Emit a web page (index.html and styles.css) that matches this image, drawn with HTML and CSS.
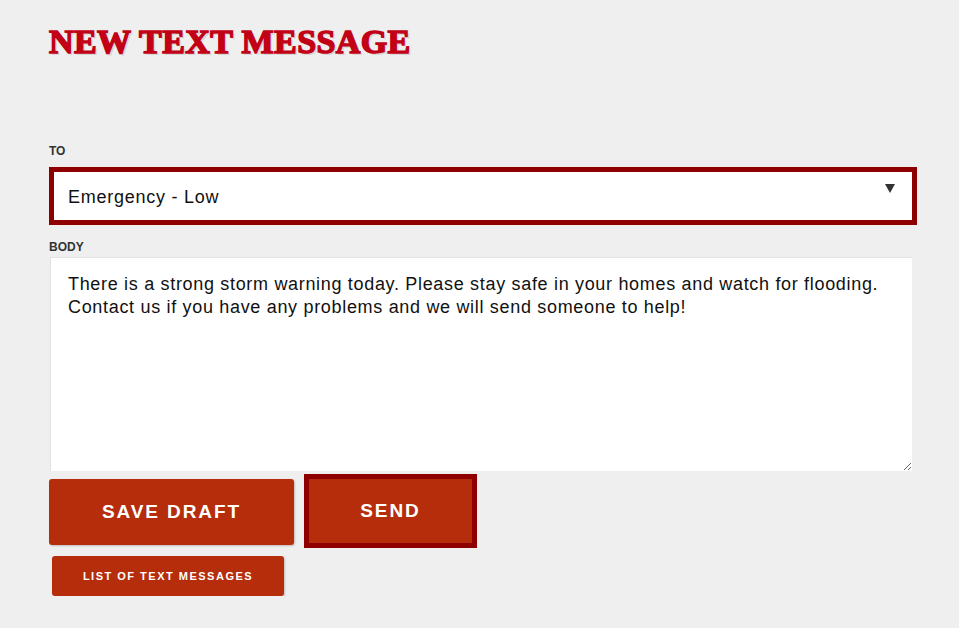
FILE: index.html
```html
<!DOCTYPE html>
<html lang="en">
<head>
<meta charset="utf-8">
<title>New Text Message</title>
<link rel="stylesheet" href="styles.css">
</head>
<body>
<main class="page">
  <h1 class="title">NEW TEXT MESSAGE</h1>
  <form class="form">
    <label class="label label-to" for="to">TO</label>
    <div class="select-wrap">
      <select id="to" class="select">
        <option>Emergency - Low</option>
      </select>
      <svg class="select-arrow" width="10" height="9" viewBox="0 0 10 9" aria-hidden="true"><polygon points="0,0 10,0 5,9" fill="#333"/></svg>
    </div>
    <label class="label label-body" for="body">BODY</label>
    <textarea id="body" class="textarea">There is a strong storm warning today. Please stay safe in your homes and watch for flooding. Contact us if you have any problems and we will send someone to help!</textarea>
    <div class="actions">
      <button type="button" class="btn btn-save">SAVE DRAFT</button>
      <button type="button" class="btn btn-send">SEND</button>
    </div>
    <button type="button" class="btn btn-list">LIST OF TEXT MESSAGES</button>
  </form>
</main>
</body>
</html>
```
FILE: styles.css
```css
html, body {
  margin: 0;
  padding: 0;
  background: #efefef;
}
body {
  font-family: "Liberation Sans", Arial, sans-serif;
  color: #111;
}
.page {
  padding: 22px 0 0 49px;
  width: 868px;
}
.title {
  margin: 0;
  font-family: "Liberation Serif", "Times New Roman", serif;
  font-weight: bold;
  font-size: 34px;
  line-height: 40px;
  letter-spacing: 0.4px;
  color: #c20016;
  -webkit-text-stroke: 1.5px #c20016;
  text-shadow: 2px 2px 0 #d6d6d6;
  white-space: nowrap;
}
.form {
  display: flex;
  flex-direction: column;
  align-items: flex-start;
}
.label {
  display: block;
  font-size: 12px;
  line-height: 14px;
  font-weight: bold;
  color: #333;
}
.label-to {
  margin-top: 82px;
  margin-bottom: 9px;
}
.label-body {
  margin-top: 15px;
  margin-bottom: 3px;
}
.select-wrap {
  position: relative;
  width: 868px;
}
.select {
  display: block;
  width: 868px;
  height: 58px;
  box-sizing: border-box;
  border: 5px solid #8e0000;
  border-radius: 0;
  background: #fff;
  appearance: none;
  -webkit-appearance: none;
  font-family: "Liberation Sans", Arial, sans-serif;
  font-size: 18px;
  letter-spacing: 0.75px;
  color: #111;
  padding: 2px 0 0 14px;
  margin: 0;
  outline: none;
}
.select-arrow {
  position: absolute;
  right: 22px;
  top: 17px;
}
.textarea {
  display: block;
  box-sizing: border-box;
  width: 862px;
  height: 214px;
  margin: 0 0 0 1px;
  border: 1px solid #e2e2e2;
  border-right: none;
  border-bottom: none;
  background: #fff;
  font-family: "Liberation Sans", Arial, sans-serif;
  font-size: 18px;
  letter-spacing: 0.68px;
  line-height: 23px;
  color: #111;
  padding: 15px 17px 12px;
  outline: none;
  resize: vertical;
}
.actions {
  display: flex;
  align-items: flex-start;
  gap: 15px;
  margin-top: 8px;
}
.btn {
  background: #b52d0b;
  color: #fff;
  border: none;
  border-radius: 3px;
  font-family: "Liberation Sans", Arial, sans-serif;
  font-weight: bold;
  cursor: pointer;
  box-shadow: 1px 1px 2px rgba(0, 0, 0, 0.2);
  padding: 0;
}
.btn-save {
  width: 245px;
  height: 66px;
  font-size: 19px;
  letter-spacing: 1.9px;
}
.btn-send {
  width: 163px;
  height: 64px;
  font-size: 19px;
  letter-spacing: 1.9px;
  border-radius: 0;
  box-shadow: none;
  outline: 5px solid #8e0000;
}
.btn-list {
  margin: 11px 0 0 3px;
  width: 232px;
  height: 40px;
  font-size: 11px;
  letter-spacing: 1.5px;
}
```
